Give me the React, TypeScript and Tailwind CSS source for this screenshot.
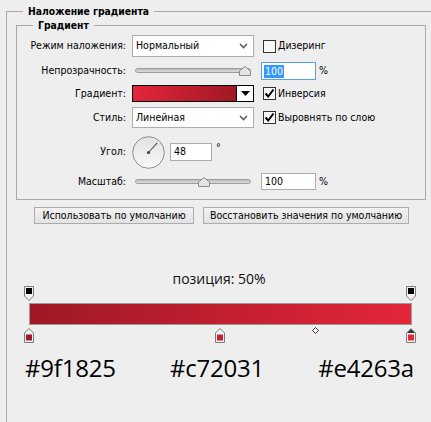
import React from "react";

const Chevron = () => (
  <svg width="9" height="6" viewBox="0 0 9 6" className="shrink-0">
    <polyline points="1,1 4.5,4.5 8,1" fill="none" stroke="#606060" strokeWidth="1.6" />
  </svg>
);

const Select = ({ value }: { value: string }) => (
  <div className="w-[122px] h-full bg-white border border-[#abadb3] flex items-center justify-between pl-[3px] pr-[5px]">
    <span>{value}</span>
    <Chevron />
  </div>
);

const Checkbox = ({ checked, label }: { checked?: boolean; label: string }) => (
  <div className="flex items-center gap-[2px]">
    <div className="w-[13px] h-[13px] border border-[#333333] bg-[#f7f7f7] flex items-center justify-center">
      {checked && (
        <svg width="11" height="11" viewBox="0 0 11 11">
          <polyline points="1.5,5.5 4.2,8.5 9.5,1.5" fill="none" stroke="#000" strokeWidth="2" />
        </svg>
      )}
    </div>
    <span>{label}</span>
  </div>
);

const Slider = ({ pos }: { pos: number }) => (
  <div className="relative w-[116px] h-[12px] ml-[3px]">
    <div className="absolute left-0 right-0 top-[3px] h-[5px] rounded-full border border-[#9c9c9c] bg-gradient-to-b from-[#bdbdbd] to-[#dcdcdc]" />
    <svg width="12" height="10" viewBox="0 0 12 10" className="absolute top-[1px]" style={{ left: pos }}>
      <path d="M0.5 9.5 V5 L6 0.5 L11.5 5 V9.5 Z" fill="#e4e4e4" stroke="#8a8a8a" />
    </svg>
  </div>
);

const TextInput = ({ children, w, blue }: { children: React.ReactNode; w: string; blue?: boolean }) => (
  <div className={`${w} h-full bg-white border ${blue ? "border-[#5aa0e6]" : "border-[#abadb3]"} flex items-center pl-[2px]`}>
    {children}
  </div>
);

const Label = ({ children }: { children: React.ReactNode }) => (
  <div className="w-[110px] text-right pr-[1px] shrink-0">{children}</div>
);

const TopStop = ({ left }: { left: number }) => (
  <svg width="10" height="15" viewBox="0 0 10 15" className="absolute top-0" style={{ left }}>
    <path d="M0.5 0.5 H9.5 V10 L5 14.5 L0.5 10 Z" fill="#f2f2f2" stroke="#7a7a7a" />
    <rect x="2" y="2" width="6" height="6" fill="#000" />
  </svg>
);

const BottomStop = ({ left, color, selected }: { left: number; color: string; selected?: boolean }) => (
  <svg width="10" height="15" viewBox="0 0 10 15" className="absolute top-[42px]" style={{ left }}>
    <path d="M5 0.5 L9.5 5 V14.5 H0.5 V5 Z" fill="#f2f2f2" stroke="#7a7a7a" />
    {selected && <path d="M5 1 L9 5 H1 Z" fill="#333" />}
    <rect x="2" y="6.5" width="6" height="6" fill={color} />
  </svg>
);

export default function App() {
  return (
    <div className="w-[431px] h-[422px] bg-[#eeeeee] overflow-hidden font-['DejaVu_Sans_Condensed','DejaVu_Sans',sans-serif] text-[10.5px] text-black">
      <fieldset className="ml-[6px] mt-[5px] w-[440px] h-[430px] border-0 border-l border-t border-[#a9a9a9] p-0 m-0 min-w-0">
        <legend className="ml-[16px] px-[5px] font-bold text-[10.3px] leading-[12px]">Наложение градиента</legend>

        <fieldset className="ml-[9px] mt-[2px] w-[410px] h-[181px] border border-[#a9a9a9] p-0 min-w-0">
          <legend className="ml-[16px] px-[5px] font-bold text-[10.3px] leading-[12px]">Градиент</legend>

          <div className="flex flex-col">
            <div className="mt-[4px] h-[22px] flex items-center">
              <Label>Режим наложения:</Label>
              <div className="ml-[5px] h-full">
                <Select value="Нормальный" />
              </div>
              <div className="ml-[9px]">
                <Checkbox label="Дизеринг" />
              </div>
            </div>

            <div className="mt-[5px] h-[18px] flex items-center">
              <Label>Непрозрачность:</Label>
              <div className="ml-[5px] w-[122px]">
                <Slider pos={104} />
              </div>
              <div className="ml-[7px] h-full flex items-center">
                <TextInput w="w-[55px]" blue>
                  <span className="bg-[#3399ff] text-white px-[1px] leading-[13px]">100</span>
                </TextInput>
                <span className="ml-[3px]">%</span>
              </div>
            </div>

            <div className="mt-[5px] h-[17px] flex items-center">
              <Label>Градиент:</Label>
              <div className="ml-[5px] w-[122px] h-full border border-black flex">
                <div className="flex-1 bg-gradient-to-r from-[#e4263a] to-[#9f1825]" />
                <div className="w-[17px] border-l border-black bg-white flex items-center justify-center">
                  <svg width="9" height="5" viewBox="0 0 9 5">
                    <path d="M0 0 H9 L4.5 5 Z" fill="#000" />
                  </svg>
                </div>
              </div>
              <div className="ml-[9px]">
                <Checkbox checked label="Инверсия" />
              </div>
            </div>

            <div className="mt-[5px] h-[21px] flex items-center">
              <Label>Стиль:</Label>
              <div className="ml-[5px] h-full">
                <Select value="Линейная" />
              </div>
              <div className="ml-[9px]">
                <Checkbox checked label="Выровнять по слою" />
              </div>
            </div>

            <div className="mt-[8px] h-[32px] flex items-center">
              <Label>Угол:</Label>
              <svg width="33" height="33" viewBox="0 0 33 33" className="ml-[5px] shrink-0">
                <defs>
                  <linearGradient id="dial" x1="0" y1="0" x2="0" y2="1">
                    <stop offset="0" stopColor="#e2e2e2" />
                    <stop offset="1" stopColor="#f8f8f8" />
                  </linearGradient>
                </defs>
                <circle cx="16.5" cy="16.5" r="15.8" fill="url(#dial)" stroke="#8c8c8c" />
                <line x1="16.5" y1="16.5" x2="25.2" y2="6.8" stroke="#555" strokeWidth="1.1" />
                <circle cx="16.5" cy="16.5" r="1.6" fill="#444" />
              </svg>
              <div className="ml-[5px] h-[18px] flex">
                <TextInput w="w-[42px]">
                  <span className="pl-[1px]">48</span>
                </TextInput>
                <span className="ml-[4px] -mt-[3px]">°</span>
              </div>
            </div>

            <div className="mt-[5px] h-[17px] flex items-center">
              <Label>Масштаб:</Label>
              <div className="ml-[5px] w-[122px]">
                <Slider pos={63} />
              </div>
              <div className="ml-[7px] h-full flex items-center">
                <TextInput w="w-[55px]">
                  <span className="pl-[1px]">100</span>
                </TextInput>
                <span className="ml-[3px]">%</span>
              </div>
            </div>
          </div>
        </fieldset>

        <div className="mt-[7px] ml-[27px] flex gap-[9px]">
          <div className="w-[160px] h-[17px] border border-[#acacac] bg-gradient-to-b from-[#f2f2f2] to-[#e3e3e3] flex items-center justify-center">
            Использовать по умолчанию
          </div>
          <div className="w-[206px] h-[17px] border border-[#acacac] bg-gradient-to-b from-[#f2f2f2] to-[#e3e3e3] flex items-center justify-center">
            Восстановить значения по умолчанию
          </div>
        </div>

        <div className="mt-[46px] w-[424px] text-center font-['Open_Sans',sans-serif] text-[14px] leading-[18px] text-[#111]">
          позиция: 50%
        </div>

        <div className="relative ml-[17px] mt-[-2px] w-[392px] h-[57px]">
          <TopStop left={0} />
          <TopStop left={382} />
          <div className="absolute left-[5px] top-[17px] w-[383px] h-[22px] border border-[#9a9a9a] bg-gradient-to-r from-[#9f1825] to-[#e4263a]" />
          <BottomStop left={0} color="#9f1825" />
          <BottomStop left={191} color="#c72031" />
          <BottomStop left={382} color="#e4263a" selected />
          <svg width="7" height="7" viewBox="0 0 7 7" className="absolute left-[288px] top-[41px]">
            <path d="M3.5 0.5 L6.5 3.5 L3.5 6.5 L0.5 3.5 Z" fill="#fff" stroke="#333" />
          </svg>
        </div>

        <div className="mt-[12px] ml-[18px] w-[389px] flex justify-between font-['Open_Sans',sans-serif] font-medium text-[24px] leading-[25px] tracking-[-0.2px] text-black">
          <span>#9f1825</span>
          <span>#c72031</span>
          <span>#e4263a</span>
        </div>
      </fieldset>
    </div>
  );
}
